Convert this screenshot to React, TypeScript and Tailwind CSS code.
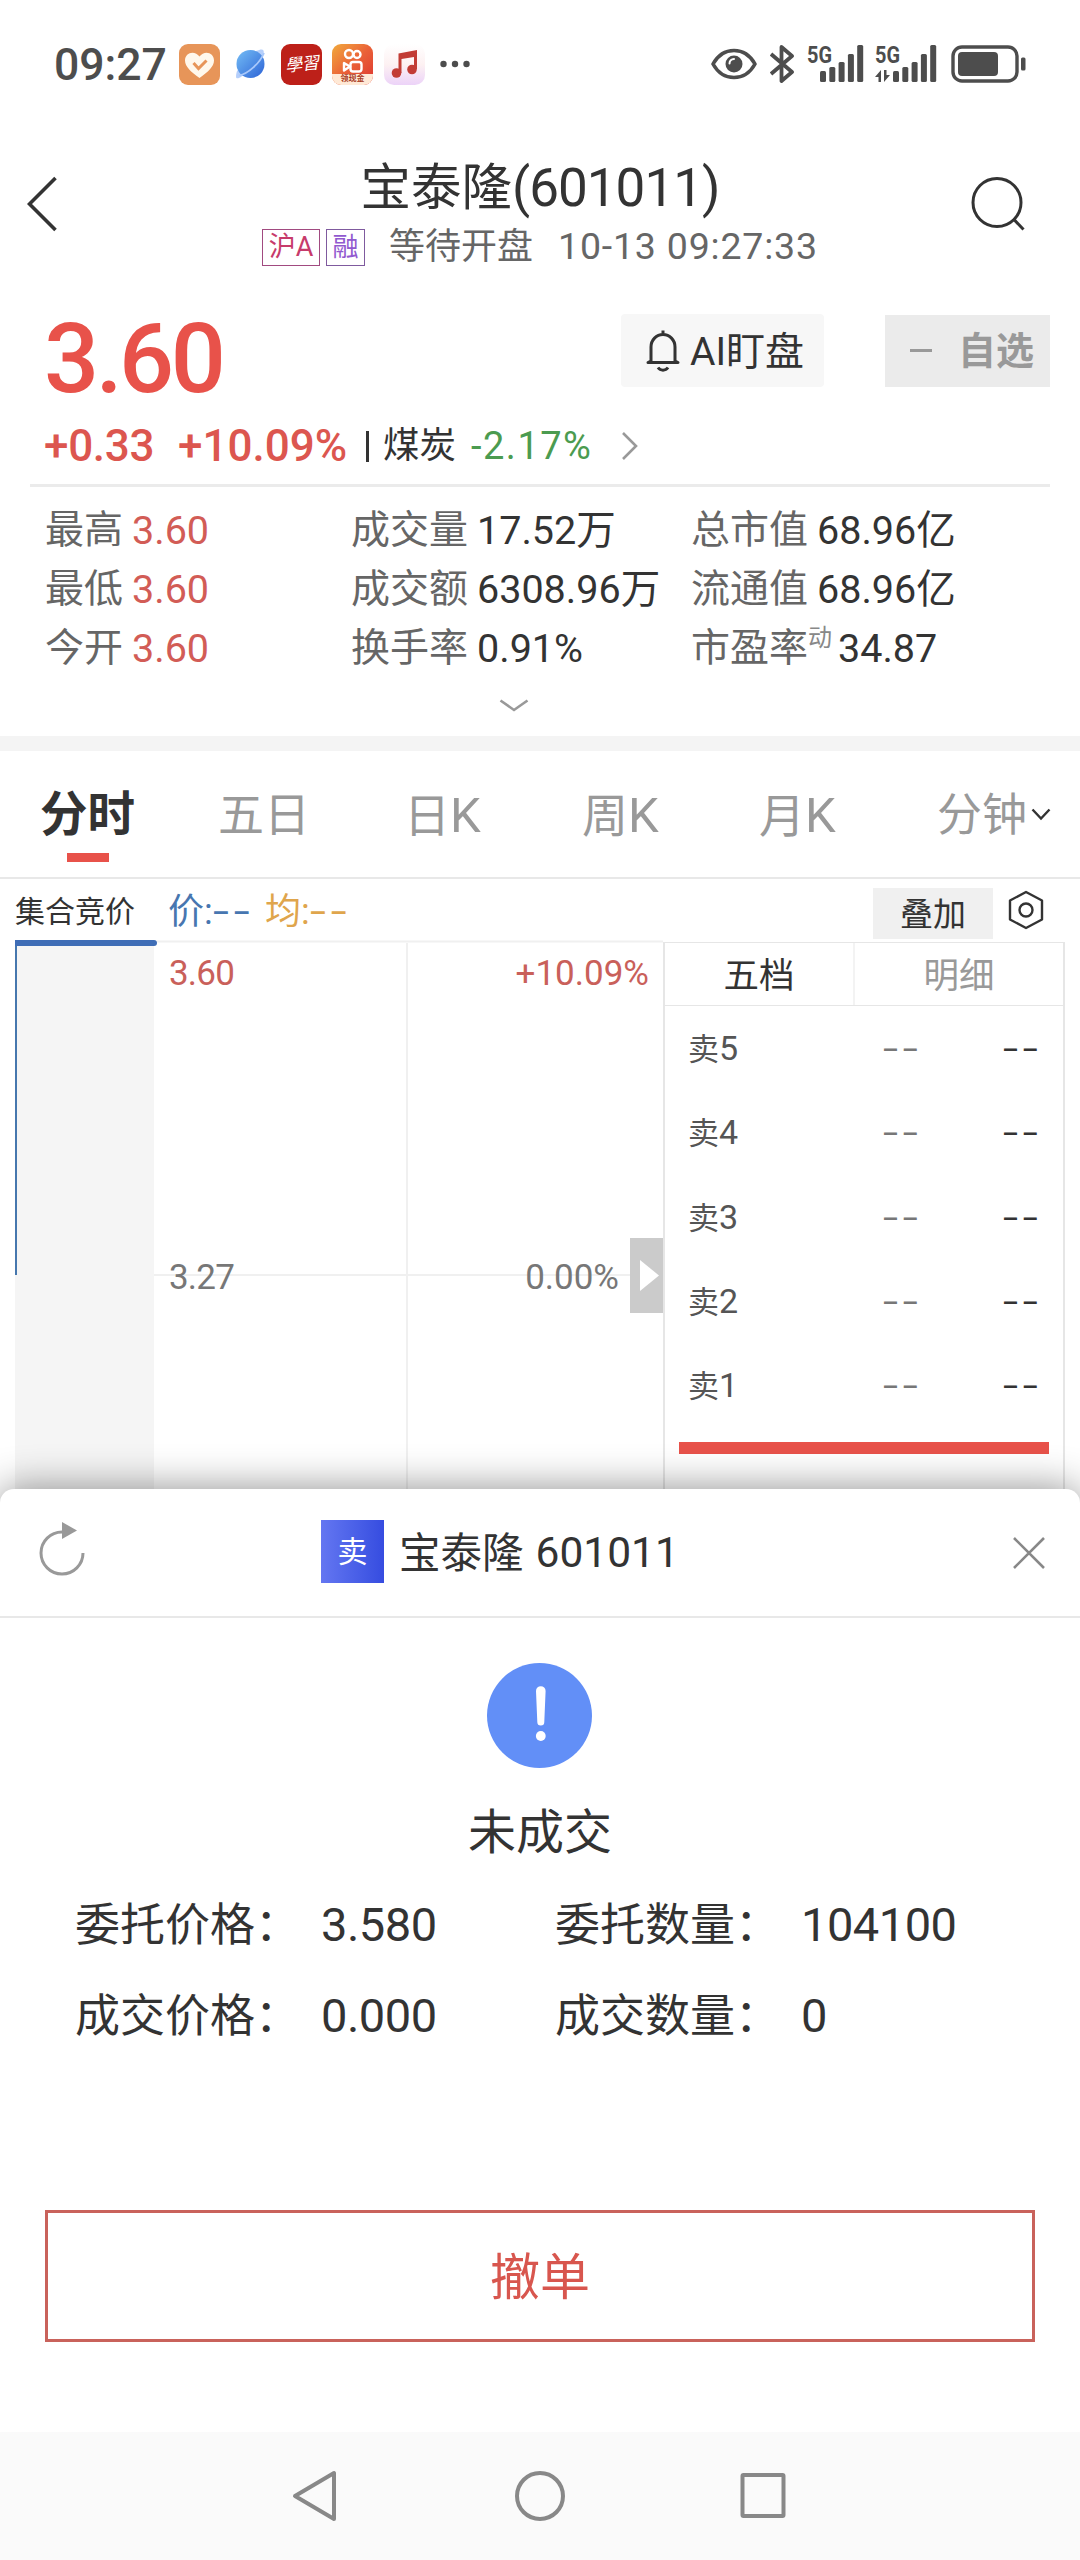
type Quote = { label: string; value: string; sup?: string; red?: boolean }

const quoteColumns: { width: string; quotes: Quote[] }[] = [
  {
    width: 'w-[306px]',
    quotes: [
      { label: '最高', value: '3.60', red: true },
      { label: '最低', value: '3.60', red: true },
      { label: '今开', value: '3.60', red: true },
    ],
  },
  {
    width: 'w-[340px]',
    quotes: [
      { label: '成交量', value: '17.52万' },
      { label: '成交额', value: '6308.96万' },
      { label: '换手率', value: '0.91%' },
    ],
  },
  {
    width: 'w-[340px]',
    quotes: [
      { label: '总市值', value: '68.96亿' },
      { label: '流通值', value: '68.96亿' },
      { label: '市盈率', value: '34.87', sup: '动' },
    ],
  },
]

const tabs = [
  { text: '五日', width: 'w-[186px]' },
  { text: '日', k: true, width: 'w-[178px]' },
  { text: '周', k: true, width: 'w-[177px]' },
  { text: '月', k: true, width: 'w-[178px]' },
]

const sells = [5, 4, 3, 2, 1]

const orderRows = [
  [
    { label: '委托价格', value: '3.580' },
    { label: '委托数量', value: '104100' },
  ],
  [
    { label: '成交价格', value: '0.000' },
    { label: '成交数量', value: '0' },
  ],
]

function Dashes({ className = '' }: { className?: string }) {
  return (
    <span className={`inline-block w-[38px] ${className}`}>
      <span className="inline-block origin-left scale-x-[1.6] tracking-[3px]">--</span>
    </span>
  )
}

function Signal({ data }: { data?: boolean }) {
  // bars shift right when the data arrows are shown
  const x = data ? 18 : 13
  const tops = [27, 23, 18, 10, 1]

  return (
    <svg width={data ? 62 : 57} height="56" viewBox={data ? '0 -8 62 56' : '0 -8 57 56'} fill="#4d4d4d">
      <text x="0" y="19" fontSize="24" fontWeight="700" fontFamily="Roboto, sans-serif" textLength="25" lengthAdjust="spacingAndGlyphs">
        5G
      </text>
      {tops.map((top, i) => (
        <rect key={top} x={x + i * 9.3} y={top} width="6" height={38 - top} rx="1.5" />
      ))}
      {data && <path d="M0 33l6-7v12H3.500v-5zM15 31l-6 7V26h2.500v5z" />}
    </svg>
  )
}

function StatusBar() {
  return (
    <div className="flex h-32 items-center pl-[54px] text-[#4d4d4d]">
      <span className="w-[125px] pt-[2px] text-[44.500px] leading-none font-medium">09:27</span>

      <svg width="41" height="41" viewBox="0 0 41 41">
        <rect width="41" height="41" rx="9" fill="#e79559" />
        <path d="M20.500 34C12 28 6 22.500 6 16.500 6 8 16 6 20.500 12.500 25 6 35 8 35 16.500 35 22.500 29 28 20.500 34z" fill="#fff8ec" />
        <path d="M14.500 19l5 5.500 8-8" fill="none" stroke="#e79559" strokeWidth="3" />
      </svg>

      <svg className="ml-[14px]" width="33" height="34" viewBox="0 0 33 34">
        <defs>
          <linearGradient id="planet" x1="0" y1="0" x2="1" y2="1">
            <stop offset="0" stopColor="#74bdf5" />
            <stop offset="1" stopColor="#2d63d6" />
          </linearGradient>
        </defs>
        <path d="M22 4c7-3 9-2 7 5L7 30c-5 3-6 1-4-6z" fill="#b5cffb" />
        <circle cx="16.500" cy="17" r="14" fill="url(#planet)" />
        <path d="M5 28.500C14 27 26 16 30 6" fill="none" stroke="#a9c8fa" strokeWidth="1.800" />
      </svg>

      <div className="ml-[14px] flex size-[41px] items-center justify-center rounded-[9px] bg-[#bd2019]">
        <span className="-rotate-6 font-['Liberation_Serif','Noto_Sans_CJK_TC',serif] text-[17px] leading-none text-white italic">學習</span>
      </div>

      <div className="ml-[10px] flex size-[41px] flex-col overflow-hidden rounded-[9px] bg-linear-to-br from-[#f0a93c] via-[#ea6138] to-[#dc3030]">
        <svg width="41" height="30" viewBox="0 0 41 30" fill="none" stroke="#fff" strokeWidth="2.400">
          <circle cx="17" cy="10" r="4" />
          <circle cx="25" cy="10.500" r="3.500" />
          <rect x="18.500" y="18" width="11" height="9.500" rx="2.500" />
          <path d="M18 22.500l-6-3.500v7.500z" strokeLinejoin="round" />
        </svg>
        <div className="flex h-[11px] items-center justify-center bg-[#ffe9d6] text-[8px] leading-none font-bold whitespace-nowrap text-[#a83a22]">
          领现金
        </div>
      </div>

      <div className="ml-[11px] flex size-[41px] items-center justify-center rounded-[10px] bg-linear-to-b from-white via-[#fdf1f2] to-[#ecd3f8]">
        <svg width="27" height="30" viewBox="0 0 27 30" fill="#c23c35">
          <circle cx="5.500" cy="24" r="4.800" />
          <circle cx="21" cy="20.500" r="4.800" />
          <path d="M7.500 4.500L26 1v19h-3V8l-12.500 2v14h-3z" />
        </svg>
      </div>

      <svg className="ml-[15px]" width="30" height="8" viewBox="0 0 30 8" fill="#4d4d4d">
        <circle cx="3.500" cy="4" r="3.200" />
        <circle cx="15" cy="4" r="3.200" />
        <circle cx="26.500" cy="4" r="3.200" />
      </svg>

      <svg className="ml-[241px]" width="46" height="32" viewBox="0 0 46 32">
        <path d="M2 16C12-2 34-2 44 16 34 34 12 34 2 16z" fill="none" stroke="#4d4d4d" strokeWidth="3.600" strokeLinejoin="round" />
        <circle cx="23" cy="16" r="8.500" fill="#4d4d4d" />
        <path d="M18.500 15.500a4.500 4.500 0 0 1 4.500-4.500" fill="none" stroke="#fff" strokeWidth="2" strokeLinecap="round" />
      </svg>
      <svg className="ml-[13px]" width="25" height="38" viewBox="0 0 25 38" fill="none" stroke="#4d4d4d" strokeWidth="3.800" strokeLinejoin="round">
        <path d="M1 9l21 18-10.500 9V2L22 11 1 29" />
      </svg>
      <div className="ml-[12px]">
        <Signal />
      </div>
      <div className="ml-[11px]">
        <Signal data />
      </div>
      <svg className="ml-[14px]" width="76" height="38" viewBox="0 0 76 38">
        <rect x="2" y="2" width="64" height="34" rx="9" fill="none" stroke="#4d4d4d" strokeWidth="3.400" />
        <rect x="7" y="7" width="40" height="24" rx="4" fill="#4d4d4d" />
        <rect x="70" y="12.500" width="4.500" height="13" rx="1.500" fill="#4d4d4d" />
      </svg>
    </div>
  )
}

function Header() {
  return (
    <header className="flex h-[152px] items-center justify-between pr-[55px] pl-[27px]">
      <svg width="30" height="56" viewBox="0 0 30 56" fill="none" stroke="#333" strokeWidth="3.600">
        <path d="M28.500 2L2.500 28l26 26" />
      </svg>

      <div className="mt-[29px] ml-[54px] flex w-[556px] flex-col self-start">
        <h1 className="flex h-[62px] items-center justify-center text-[50.500px] leading-none text-[#333]">
          宝泰隆<span className="text-[53px] tracking-[-1px]">(601011)</span>
        </h1>
        <div className="mt-[8px] flex h-[40px] items-center text-[36px] leading-none text-[#666]">
          <span className="flex h-[37px] w-[58px] items-center justify-center border border-[#a14a80] text-[27px] text-[#c73b6b]">沪A</span>
          <span className="ml-[6px] flex h-[37px] w-[39px] items-center justify-center border border-[#7f5a9e] text-[26px] text-[#9159cf]">融</span>
          <span className="ml-[24px]">等待开盘</span>
          <span className="ml-[25px] text-[37.500px] tracking-[0.800px] whitespace-nowrap">10-13 09:27:33</span>
        </div>
      </div>

      <svg width="56" height="56" viewBox="0 0 56 56" fill="none" stroke="#333" strokeWidth="3">
        <circle cx="28" cy="26.500" r="24" />
        <path d="M44.500 43l10 10.500" />
      </svg>
    </header>
  )
}

function Summary() {
  return (
    <section>
      <div className="mt-[34px] flex h-[73px] items-center pr-[30px] pl-[44px]">
        <span className="w-[577px] pt-[18px] text-[97px] leading-none font-medium tracking-[-3.500px] text-[#e8524a]">3.60</span>
        <button className="flex h-[73px] w-[203px] items-center rounded-sm bg-[#f7f7f7] pl-[24px] text-[39px] leading-none text-[#333]">
          <svg className="mr-[9px]" width="36" height="44" viewBox="0 0 36 44" fill="none" stroke="#333" strokeWidth="3">
            <path d="M18 1.500v4M6 32V18a12 12.500 0 0 1 24 0v14l3 1.500H3z" strokeLinejoin="round" />
            <path d="M13 38.500c2.500 3.500 7.500 3.500 10 0" />
          </svg>
          <span className="pt-[3px]">AI盯盘</span>
        </button>
        <button className="ml-[61px] flex h-[72px] w-[165px] items-center bg-[#ebebeb] pl-[25px] text-[38px] leading-none font-bold text-[#999]">
          <span className="mr-[26px] h-[3px] w-[22px] bg-[#999]" />
          自选
        </button>
      </div>

      <div className="mt-[39px] flex h-[40px] items-center pl-[44px] leading-none">
        <span className="w-[134px] text-[44px] font-medium tracking-[-0.300px] text-[#dc564f]">+0.33</span>
        <span className="w-[188px] text-[44px] font-medium text-[#dc564f]">+10.09%</span>
        <span className="h-[31px] w-[3px] bg-[#333]" />
        <span className="ml-[14px] pt-[1px] text-[36.500px] text-[#333]">煤炭</span>
        <span className="ml-[15px] text-[38px] tracking-[1.500px] text-[#4b9b50]">-2.17%</span>
        <svg className="ml-[29px]" width="18" height="30" viewBox="0 0 18 30" fill="none" stroke="#999" strokeWidth="2.600">
          <path d="M2 2l13 13L2 28" />
        </svg>
      </div>

      <div className="mx-[30px] mt-[18px] h-[3px] bg-[#ebebeb]" />

      <div className="mt-[14px] flex pl-[45px] text-[39px] leading-none whitespace-nowrap">
        {quoteColumns.map(({ width, quotes }) => (
          <div key={quotes[0].label} className={width}>
            {quotes.map(({ label, value, sup, red }) => (
              <div key={label} className="flex h-[59px] items-center">
                <span className="text-[#666]">{label}</span>
                {sup && <span className="mb-[22px] text-[24px] text-[#888]">{sup}</span>}
                <span className={`text-[39.500px] ${sup ? 'ml-[6px]' : 'ml-[9px]'} ${red ? 'text-[#d25c56]' : 'text-[#333]'}`}>{value}</span>
              </div>
            ))}
          </div>
        ))}
      </div>

      <svg className="mt-[21px] mb-[24px] ml-[499px] block" width="30" height="13" viewBox="0 0 30 13" fill="none" stroke="#999" strokeWidth="2.600">
        <path d="M1.500 1.500L15 11 28.500 1.500" />
      </svg>
      <div className="h-[15px] bg-[#f4f4f4]" />
    </section>
  )
}

function PeriodTabs() {
  return (
    <nav className="flex h-[128px] items-center border-b-2 border-[#e8e8e8] pl-[40px] text-[46px] leading-none text-[#999]">
      <div className="flex h-full w-[178px] flex-col pt-[41px]">
        <span className="text-[47.500px] font-bold text-[#333]">分时</span>
        <span className="mt-[13px] ml-[27px] h-[9px] w-[42px] bg-[#e8524a]" />
      </div>
      {tabs.map(({ text, k, width }) => (
        <span key={text} className={`pt-[2px] ${width}`}>
          {text}
          {k && <span className="text-[49px]">K</span>}
        </span>
      ))}
      <span className="pt-[2px] text-[45px]">分钟</span>
      <svg className="ml-[4px]" width="20" height="13" viewBox="0 0 20 13" fill="none" stroke="#333" strokeWidth="2.400">
        <path d="M1.500 1.500L10 10.500l8.500-9" />
      </svg>
    </nav>
  )
}

function Legend() {
  return (
    <div className="flex h-[61px] items-center pl-[15px] text-[36px] leading-none">
      <span className="w-[153px] pt-[4px] text-[30px] text-[#333]">集合竞价</span>
      <span className="flex w-[97px] pt-[5px] text-[#4776b0]">
        价:
        <Dashes />
      </span>
      <span className="flex w-[608px] pt-[5px] text-[#dfa54c]">
        均:
        <Dashes />
      </span>
      <button className="mt-[7px] flex h-[51px] w-[120px] items-center justify-center bg-[#f0f0f0] pt-[2px] text-[33px] text-[#333]">叠加</button>
      <svg className="ml-[15px]" width="36" height="40" viewBox="0 0 36 40" fill="none" stroke="#333" strokeWidth="2.400" strokeLinejoin="round">
        <path d="M18 2l16 8.500v19L18 38 2 29.500v-19z" />
        <circle cx="18" cy="20" r="6.500" />
      </svg>
    </div>
  )
}

function Chart() {
  return (
    <div className="relative w-[663px] text-[35px] leading-none">
      <svg className="block" width="663" height="549" viewBox="0 0 663 549">
        <rect x="15" y="2" width="139" height="547" fill="#f5f5f5" />
        <path d="M157 1.500h506M407 3v546M154 335h476" stroke="#f0f0f0" strokeWidth="2" />
        <rect x="15" width="2" height="335" fill="#4677ae" />
        <path d="M15 0h139a3 3 0 0 1 0 6H15z" fill="#3f6db6" />
      </svg>
      <span className="absolute top-[16px] left-[169px] tracking-[-0.800px] text-[#c9605a]">3.60</span>
      <span className="absolute top-[16px] right-[14px] text-[#c9605a]">+10.09%</span>
      <span className="absolute top-[320px] left-[169px] tracking-[-0.800px] text-[#777]">3.27</span>
      <span className="absolute top-[320px] right-[44px] text-[#777]">0.00%</span>
      <div className="absolute top-[298px] right-0 flex h-[75px] w-[33px] items-center justify-end bg-[#cbcbcb] pr-[4px]">
        <svg width="19" height="31" viewBox="0 0 19 31" fill="#fff">
          <path d="M0 0l19 15.500L0 31z" />
        </svg>
      </div>
    </div>
  )
}

function OrderBook() {
  return (
    <div className="mt-[2px] h-[547px] w-[402px] border-x-2 border-t border-[#e6e6e6] leading-none">
      <div className="flex h-[63px] border-b border-[#e6e6e6] text-[35.500px]">
        <span className="flex w-[190px] items-center justify-center border-r-2 border-[#f3f3f3] pt-[5px] text-[#333]">五档</span>
        <span className="flex flex-1 items-center justify-center pt-[5px] text-[#999]">明细</span>
      </div>
      {sells.map((n) => (
        <div key={n} className="flex h-[84.300px] items-center pl-[23px] text-[34px] text-[#555]">
          <span className="w-[195px] text-[31px]">
            卖<span className="text-[34px]">{n}</span>
          </span>
          <Dashes className="mr-[82px] text-[#777]" />
          <Dashes className="text-[#333]" />
        </div>
      ))}
      <div className="mt-[15px] ml-[14px] h-[12px] w-[370px] bg-[#e8524a]" />
    </div>
  )
}

function OrderSheet() {
  return (
    <section className="relative h-[943px] rounded-t-[14px] bg-white shadow-[0_0_40px_rgba(0,0,0,0.45)]">
      <div className="flex h-[129px] items-center border-b-2 border-[#e8e8e8] pl-[38px] leading-none text-[#333]">
        <svg className="mb-[9px]" width="48" height="56" viewBox="0 0 48 56">
          <path d="M45 33A21 21 0 1 1 24 12" fill="none" stroke="#999" strokeWidth="3" />
          <path d="M24 2l15 8.500L24 19z" fill="#999" />
        </svg>
        <span className="mb-[2px] ml-[235px] flex size-[63px] items-center justify-center bg-linear-to-r from-[#6476f1] to-[#364ce0] text-[30px] text-white">卖</span>
        <span className="ml-[15px] pt-[2px] text-[41.500px]">宝泰隆</span>
        <span className="ml-[12px] w-[146px] pt-[1px] text-[42.500px]">601011</span>
        <svg className="ml-[330px]" width="34" height="34" viewBox="0 0 34 34" fill="none" stroke="#888" strokeWidth="2.600">
          <path d="M2 2l30 30M32 2L2 32" />
        </svg>
      </div>

      <div className="flex flex-col items-center pt-[45px]">
        <svg className="mr-[2px]" width="105" height="105" viewBox="0 0 105 105">
          <circle cx="52.500" cy="52.500" r="52.500" fill="#628ff7" />
          <path d="M49 28a4.800 4.800 0 0 1 9.600 0l-1.300 31a3.500 3.500 0 0 1-7 0z" fill="#fff" />
          <circle cx="53.800" cy="73" r="4.900" fill="#fff" />
        </svg>
        <p className="mt-[38px] h-[52px] text-[48px] leading-[53px] text-[#333]">未成交</p>
      </div>

      <div className="mt-[21px] pl-[75px] text-[45px] leading-none text-[#333]">
        {orderRows.map((row) => (
          <div key={row[0].label} className="flex h-[91px] items-center">
            {row.map(({ label, value }) => (
              <div key={label} className="flex w-[480px] items-center whitespace-nowrap">
                <span className="w-[246px] pt-[1px]">{label}：</span>
                <span className="text-[47px] tracking-[-0.500px]">{value}</span>
              </div>
            ))}
          </div>
        ))}
      </div>

      <button className="mt-[149px] ml-[45px] flex h-[132px] w-[990px] items-center justify-center border-3 border-[#c9625b] pt-[3px] text-[50px] leading-none text-[#d8564e]">
        撤单
      </button>
    </section>
  )
}

function NavBar() {
  return (
    <div className="relative flex h-[128px] items-center justify-center gap-[174px] bg-[#fafafa]">
      <svg width="50" height="56" viewBox="0 0 50 56" fill="none" stroke="#888" strokeWidth="4" strokeLinejoin="round">
        <path d="M43 5v46L4 28z" />
      </svg>
      <svg width="50" height="50" viewBox="0 0 50 50" fill="none" stroke="#888" strokeWidth="4">
        <circle cx="25" cy="25" r="23" />
      </svg>
      <svg width="50" height="50" viewBox="0 0 50 50" fill="none" stroke="#888" strokeWidth="4">
        <rect x="3.500" y="4" width="41" height="41" rx="1" />
      </svg>
    </div>
  )
}

export default function App() {
  return (
    <main className="h-[2560px] w-[1080px] overflow-hidden bg-white font-['Roboto','Noto_Sans_CJK_SC',sans-serif]">
      <StatusBar />
      <Header />
      <Summary />
      <PeriodTabs />
      <Legend />
      <div className="flex">
        <Chart />
        <OrderBook />
      </div>
      <OrderSheet />
      <NavBar />
    </main>
  )
}
